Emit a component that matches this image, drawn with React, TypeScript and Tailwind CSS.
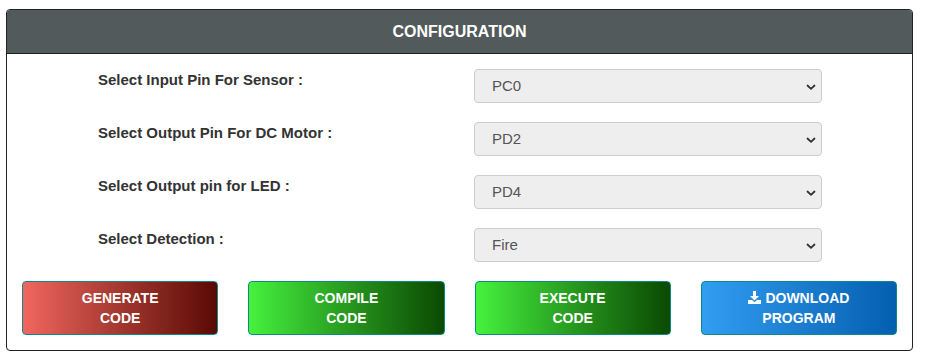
import React from "react";

const rows = [
  { label: "Select Input Pin For Sensor :", value: "PC0" },
  { label: "Select Output Pin For DC Motor :", value: "PD2" },
  { label: "Select Output pin for LED :", value: "PD4" },
  { label: "Select Detection :", value: "Fire" },
];

function Chevron() {
  return (
    <svg width="10" height="7" viewBox="0 0 10 7" className="absolute right-[5px] top-[14px]">
      <path d="M1.5 1.5 L5 4.8 L8.5 1.5" fill="none" stroke="#333" strokeWidth="1.8" strokeLinecap="round" strokeLinejoin="round" />
    </svg>
  );
}

function DownloadIcon() {
  return (
    <svg width="13" height="13" viewBox="0 0 13 13" className="inline-block mr-[4px] -mt-[3px] align-middle">
      <path d="M5 0 H8 V5 H11 L6.5 9.5 L2 5 H5 Z" fill="white" />
      <path d="M0 9 H4 L6.5 11.3 L9 9 H13 V13 H0 Z" fill="white" />
    </svg>
  );
}

export default function App() {
  return (
    <div className="w-[925px] h-[360px] bg-white pt-[9px] pl-[6px]" style={{ fontFamily: '"Liberation Sans", Arial, sans-serif' }}>
      <div className="w-[907px] h-[342px] border border-[#222] rounded-[4px] overflow-hidden flex flex-col">
        <div className="h-[44px] bg-[#525a5b] border-b border-[#222] flex items-center justify-center text-white font-bold text-[16px]">
          CONFIGURATION
        </div>
        <div className="flex flex-col gap-[19px] pt-[15px]">
          {rows.map((r) => (
            <div key={r.label} className="flex h-[34px]">
              <div className="w-[467px] pl-[91px] pt-[1px] text-[15px] font-bold text-[#333] leading-[20px]">{r.label}</div>
              <div className="relative w-[348px] h-[34px] bg-[#eee] border border-[#ccc] rounded-[4px] pl-[17px] flex items-center text-[15px] text-[#555]">
                {r.value}
                <Chevron />
              </div>
            </div>
          ))}
        </div>
        <div className="grid grid-cols-4 mt-[19px] px-[15px] gap-x-[30px]">
          <button className="h-[54px] rounded-[4px] border border-[#0e8a86] bg-gradient-to-r from-[#f1675e] to-[#5a0904] text-white font-bold text-[14px] leading-[20px]">
            GENERATE<br />CODE
          </button>
          <button className="h-[54px] rounded-[4px] border border-[#0e8a86] bg-gradient-to-r from-[#46f23e] to-[#0b4a04] text-white font-bold text-[14px] leading-[20px]">
            COMPILE<br />CODE
          </button>
          <button className="h-[54px] rounded-[4px] border border-[#0e8a86] bg-gradient-to-r from-[#46f23e] to-[#0b4a04] text-white font-bold text-[14px] leading-[20px]">
            EXECUTE<br />CODE
          </button>
          <button className="h-[54px] rounded-[4px] border border-[#0e8a86] bg-gradient-to-r from-[#319ef2] to-[#035fb0] text-white font-bold text-[14px] leading-[20px]">
            <DownloadIcon />DOWNLOAD<br />PROGRAM
          </button>
        </div>
      </div>
    </div>
  );
}
